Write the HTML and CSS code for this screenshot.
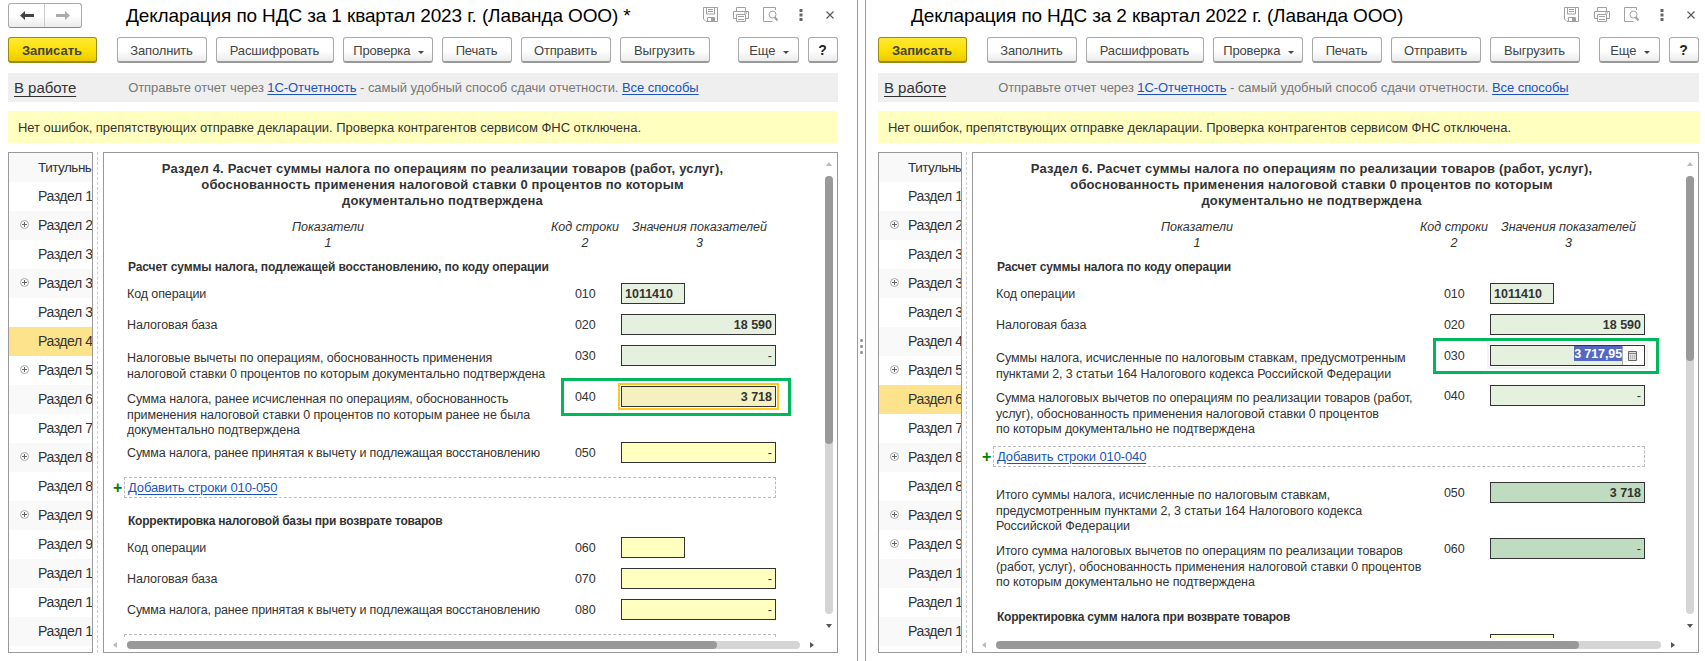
FILE: index.html
```
<!DOCTYPE html>
<html lang="ru">
  <head>
    <meta charset="UTF-8" />
    <title>Декларация по НДС</title>
    <link rel="stylesheet" href="styles.css">
  </head>
  <body>
    <!-- Icons -->
    <svg class="sprite" width="0" height="0">
      <symbol id="i-save" viewBox="0 0 16 16">
        <path d="M.5.5h14v14H3L.5 12zM3.500 1v6h8V1M5 2.500h5M5 4.500h5M4.500 14.500v-4h7v4" fill="none" stroke="#a0a0a0" />
        <path d="M8 11h3v3.500H8z" fill="#a0a0a0" />
      </symbol>
      <symbol id="i-print" viewBox="0 0 16 16">
        <path d="M3.500 4.500v-4h9v4M3.500 11.500h-3v-7h15v7h-3M3.500 7.500h9v7h-9zM5 9.500h6M5 12.500h6M11 6h3" fill="none" stroke="#a0a0a0" />
      </symbol>
      <symbol id="i-preview" viewBox="0 0 16 16">
        <path d="M12.500 3V.5H.5v14h9" fill="none" stroke="#a0a0a0" />
        <circle cx="9.500" cy="7.500" r="3.500" fill="none" stroke="#a0a0a0" />
        <path d="M11.500 10l3 3.500" stroke="#a0a0a0" stroke-width="2" />
      </symbol>
      <symbol id="i-dots" viewBox="0 0 4 12">
        <path d="M.5 0h3v3h-3zM.5 4.500h3v3h-3zM.5 9h3v3h-3z" fill="#666" />
      </symbol>
      <symbol id="i-close" viewBox="0 0 8 8">
        <path d="M.5.5l7 7M7.500.5l-7 7" stroke="#555" stroke-width="1.100" />
      </symbol>
      <symbol id="i-plus" viewBox="0 0 9 9">
        <circle cx="4.500" cy="4.500" r="4" fill="#fff" stroke="#a6a6a6" />
        <path d="M2 4.500h5M4.500 2v5" stroke="#666" />
      </symbol>
      <symbol id="i-calc" viewBox="0 0 9 10">
        <path d="M.5.5h8v9h-8z" fill="#ddd" stroke="#666" />
        <path d="M1 2.500h7" stroke="#888" />
        <path d="M2 5h5M2 7h5" stroke="#999" stroke-dasharray="1 1" />
      </symbol>
    </svg>

    <div class="workspace">
      <section class="window">
        <header class="title-bar">
          <div class="nav-buttons">
            <button><svg width="14" height="9"><path d="M5 0L0 4.500 5 9V6h9V3H5z" fill="#444" /></svg></button>
            <button><svg width="14" height="9"><path d="M9 0l5 4.500L9 9V6H0V3h9z" fill="#aaa" /></svg></button>
          </div>
          <h1>Декларация по НДС за 1 квартал 2023 г. (Лаванда ООО) *</h1>
          <div class="title-icons">
            <svg width="16" height="16"><use href="#i-save" /></svg>
            <svg width="16" height="16"><use href="#i-print" /></svg>
            <svg width="16" height="16"><use href="#i-preview" /></svg>
            <svg class="dots" width="4" height="12"><use href="#i-dots" /></svg>
            <svg width="8" height="8"><use href="#i-close" /></svg>
          </div>
        </header>

        <div class="toolbar">
          <button class="btn primary">Записать</button>
          <button class="btn">Заполнить</button>
          <button class="btn wide">Расшифровать</button>
          <button class="btn">Проверка <i class="caret"></i></button>
          <button class="btn small">Печать</button>
          <button class="btn">Отправить</button>
          <button class="btn">Выгрузить</button>
          <button class="btn more">Еще <i class="caret"></i></button>
          <button class="btn help">?</button>
        </div>

        <div class="status-bar">
          <a class="state">В работе</a>
          <p>Отправьте отчет через <a>1С-Отчетность</a> - самый удобный способ сдачи отчетности. <a>Все способы</a></p>
        </div>
        <div class="message">Нет ошибок, препятствующих отправке декларации. Проверка контрагентов сервисом ФНС отключена.</div>

        <div class="main">
          <ul class="sections">
            <li>Титульный лист</li>
            <li>Раздел 1</li>
            <li><svg width="9" height="9"><use href="#i-plus" /></svg>Раздел 2</li>
            <li>Раздел 3</li>
            <li><svg width="9" height="9"><use href="#i-plus" /></svg>Раздел 3</li>
            <li>Раздел 3</li>
            <li class="active">Раздел 4</li>
            <li><svg width="9" height="9"><use href="#i-plus" /></svg>Раздел 5</li>
            <li>Раздел 6</li>
            <li>Раздел 7</li>
            <li><svg width="9" height="9"><use href="#i-plus" /></svg>Раздел 8</li>
            <li>Раздел 8</li>
            <li><svg width="9" height="9"><use href="#i-plus" /></svg>Раздел 9</li>
            <li>Раздел 9</li>
            <li>Раздел 1</li>
            <li>Раздел 1</li>
            <li>Раздел 1</li>
          </ul>
          <div class="divider"></div>

          <div class="sheet">
            <div class="form">
              <h2>Раздел 4. Расчет суммы налога по операциям по реализации товаров (работ, услуг),<br>обоснованность применения налоговой ставки 0 процентов по которым<br>документально подтверждена</h2>
              <div class="head">
                <span>Показатели<br>1</span>
                <span>Код строки<br>2</span>
                <span>Значения показателей<br>3</span>
              </div>
              <h3>Расчет суммы налога, подлежащей восстановлению, по коду операции</h3>
              <div class="row">
                <label>Код операции</label><span class="code">010</span>
                <div class="field short green">1011410</div>
              </div>
              <div class="row">
                <label>Налоговая база</label><span class="code">020</span>
                <div class="field green">18 590</div>
              </div>
              <div class="row two">
                <label>Налоговые вычеты по операциям, обоснованность применения<br>налоговой ставки 0 процентов по которым документально подтверждена</label><span class="code">030</span>
                <div class="field empty green">-</div>
              </div>
              <div class="row three">
                <label>Сумма налога, ранее исчисленная по операциям, обоснованность<br>применения налоговой ставки 0 процентов по которым ранее не была<br>документально подтверждена</label><span class="code">040</span>
                <div class="field current">3 718</div>
                <div class="marker"></div>
              </div>
              <div class="row last">
                <label>Сумма налога, ранее принятая к вычету и подлежащая восстановлению</label><span class="code">050</span>
                <div class="field empty yellow">-</div>
              </div>
              <div class="add-row"><b>+</b><a>Добавить строки 010-050</a></div>
              <h3 class="next">Корректировка налоговой базы при возврате товаров</h3>
              <div class="row">
                <label>Код операции</label><span class="code">060</span>
                <div class="field short yellow"></div>
              </div>
              <div class="row">
                <label>Налоговая база</label><span class="code">070</span>
                <div class="field empty yellow">-</div>
              </div>
              <div class="row last">
                <label>Сумма налога, ранее принятая к вычету и подлежащая восстановлению</label><span class="code">080</span>
                <div class="field empty yellow">-</div>
              </div>
              <div class="add-row"></div>
            </div>
            <div class="v-scroll">
              <i class="up"></i>
              <div class="track"><div class="thumb long"></div></div>
              <i class="down"></i>
            </div>
            <div class="h-scroll">
              <i class="left"></i>
              <div class="track"><div class="thumb"></div></div>
              <i class="right"></i>
            </div>
          </div>
        </div>
      </section>

      <div class="splitter"><i></i><i></i><i></i></div>

      <section class="window second">
        <header class="title-bar">
          <h1>Декларация по НДС за 2 квартал 2022 г. (Лаванда ООО)</h1>
          <div class="title-icons">
            <svg width="16" height="16"><use href="#i-save" /></svg>
            <svg width="16" height="16"><use href="#i-print" /></svg>
            <svg width="16" height="16"><use href="#i-preview" /></svg>
            <svg class="dots" width="4" height="12"><use href="#i-dots" /></svg>
            <svg width="8" height="8"><use href="#i-close" /></svg>
          </div>
        </header>

        <div class="toolbar">
          <button class="btn primary">Записать</button>
          <button class="btn">Заполнить</button>
          <button class="btn wide">Расшифровать</button>
          <button class="btn">Проверка <i class="caret"></i></button>
          <button class="btn small">Печать</button>
          <button class="btn">Отправить</button>
          <button class="btn">Выгрузить</button>
          <button class="btn more">Еще <i class="caret"></i></button>
          <button class="btn help">?</button>
        </div>

        <div class="status-bar">
          <a class="state">В работе</a>
          <p>Отправьте отчет через <a>1С-Отчетность</a> - самый удобный способ сдачи отчетности. <a>Все способы</a></p>
        </div>
        <div class="message">Нет ошибок, препятствующих отправке декларации. Проверка контрагентов сервисом ФНС отключена.</div>

        <div class="main">
          <ul class="sections">
            <li>Титульный лист</li>
            <li>Раздел 1</li>
            <li><svg width="9" height="9"><use href="#i-plus" /></svg>Раздел 2</li>
            <li>Раздел 3</li>
            <li><svg width="9" height="9"><use href="#i-plus" /></svg>Раздел 3</li>
            <li>Раздел 3</li>
            <li>Раздел 4</li>
            <li><svg width="9" height="9"><use href="#i-plus" /></svg>Раздел 5</li>
            <li class="active">Раздел 6</li>
            <li>Раздел 7</li>
            <li><svg width="9" height="9"><use href="#i-plus" /></svg>Раздел 8</li>
            <li>Раздел 8</li>
            <li><svg width="9" height="9"><use href="#i-plus" /></svg>Раздел 9</li>
            <li><svg width="9" height="9"><use href="#i-plus" /></svg>Раздел 9</li>
            <li>Раздел 1</li>
            <li>Раздел 1</li>
            <li>Раздел 1</li>
          </ul>
          <div class="divider"></div>

          <div class="sheet">
            <div class="form">
              <h2>Раздел 6. Расчет суммы налога по операциям по реализации товаров (работ, услуг),<br>обоснованность применения налоговой ставки 0 процентов по которым<br>документально не подтверждена</h2>
              <div class="head">
                <span>Показатели<br>1</span>
                <span>Код строки<br>2</span>
                <span>Значения показателей<br>3</span>
              </div>
              <h3>Расчет суммы налога по коду операции</h3>
              <div class="row">
                <label>Код операции</label><span class="code">010</span>
                <div class="field short green">1011410</div>
              </div>
              <div class="row">
                <label>Налоговая база</label><span class="code">020</span>
                <div class="field green">18 590</div>
              </div>
              <div class="row two edit">
                <label>Суммы налога, исчисленные по налоговым ставкам, предусмотренным<br>пунктами 2, 3 статьи 164 Налогового кодекса Российской Федерации</label><span class="code">030</span>
                <div class="field green editing">
                  <mark>3 717,95</mark>
                  <span class="calc"><svg width="9" height="10"><use href="#i-calc" /></svg></span>
                </div>
                <div class="marker"></div>
              </div>
              <div class="row three sum">
                <label>Сумма налоговых вычетов по операциям по реализации товаров (работ,<br>услуг), обоснованность применения налоговой ставки 0 процентов<br>по которым документально не подтверждена</label><span class="code">040</span>
                <div class="field empty green">-</div>
              </div>
              <div class="add-row"><b>+</b><a>Добавить строки 010-040</a></div>
              <div class="row three total">
                <label>Итого суммы налога, исчисленные по налоговым ставкам,<br>предусмотренным пунктами 2, 3 статьи 164 Налогового кодекса<br>Российской Федерации</label><span class="code">050</span>
                <div class="field dark">3 718</div>
              </div>
              <div class="row three">
                <label>Итого сумма налоговых вычетов по операциям по реализации товаров<br>(работ, услуг), обоснованность применения налоговой ставки 0 процентов<br>по которым документально не подтверждена</label><span class="code">060</span>
                <div class="field empty dark">-</div>
              </div>
              <h3 class="next">Корректировка сумм налога при возврате товаров</h3>
              <div class="row">
                <label></label><span class="code"></span>
                <div class="field short yellow"></div>
              </div>
            </div>
            <div class="v-scroll">
              <i class="up"></i>
              <div class="track"><div class="thumb"></div></div>
              <i class="down"></i>
            </div>
            <div class="h-scroll">
              <i class="left"></i>
              <div class="track"><div class="thumb"></div></div>
              <i class="right"></i>
            </div>
          </div>
        </div>
      </section>
    </div>
  </body>
</html>
```
FILE: styles.css
```
* {
  box-sizing: border-box;
}

body {
  margin: 0;
  background: #fff;
  color: #333;
  font-family: "Liberation Sans", Arial, sans-serif;
  font-size: 13px;
  letter-spacing: -0.04px;
}

.sprite {
  display: block;
}

h1,
h2,
h3,
p,
ul {
  margin: 0;
  padding: 0;
}

.workspace {
  display: grid;
  grid-template-columns: 857px 9px 1fr;
  height: 661px;
  overflow: hidden;
}

.window {
  padding: 0 19px 8px 8px;
  display: flex;
  flex-direction: column;
  min-width: 0;
}

.window.second {
  padding: 0 6px 8px 12px;
}

.splitter {
  border: 1px solid #999;
  border-width: 0 1px;
  display: flex;
  flex-direction: column;
  align-items: center;
  gap: 3px;
  padding-top: 339px;
}

.splitter i {
  width: 3px;
  height: 3px;
  border-radius: 1px;
  background: #999;
}

/* Title */
.title-bar {
  display: flex;
  align-items: center;
  height: 37px;
  padding-bottom: 7px;
}

.nav-buttons {
  display: flex;
  width: 74px;
  height: 25px;
  margin-right: 44px;
  border: 1px solid #aaa;
  border-bottom-color: #888;
  border-radius: 3px;
  background: linear-gradient(#fff 50%, #ebebeb);
}

.nav-buttons button {
  display: flex;
  align-items: center;
  justify-content: center;
  width: 36px;
  padding: 0;
  border: none;
  background: none;
}

.nav-buttons button:first-child {
  border-right: 1px solid #ccc;
}

h1 {
  padding-top: 1px;
  color: #000;
  font-size: 19px;
  font-weight: normal;
  letter-spacing: -0.13px;
  white-space: nowrap;
}

.second h1 {
  margin-left: 33px;
}

.title-icons {
  display: flex;
  align-items: center;
  gap: 14px;
  margin-left: auto;
  padding-right: 4px;
}

.title-icons .dots {
  margin: 0 9px 0 6px;
}

/* Toolbar */
.toolbar {
  display: flex;
  gap: 9px;
  height: 26px;
  margin-bottom: 10px;
}

.btn {
  width: 90px;
  height: 26px;
  padding: 1px 1px 0 0;
  border: 1px solid #aaa;
  border-bottom: 2px solid #999;
  border-radius: 3px;
  background: linear-gradient(#fff 55%, #ebebeb);
  color: #444;
  font: inherit;
  letter-spacing: -0.15px;
  white-space: nowrap;
}

.btn.primary {
  width: 89px;
  margin-right: 11px;
  border-color: #9a8a10;
  background: linear-gradient(#ffe838, #fde000 55%, #ecca00);
  font-weight: bold;
  letter-spacing: 0;
}

.btn.wide {
  width: 118px;
}

.btn.small {
  width: 70px;
}

.btn.more {
  width: 61px;
  margin-left: auto;
}

.btn.help {
  width: 30px;
  color: #222;
  font-size: 14px;
  font-weight: bold;
}

.caret {
  display: inline-block;
  margin: 0 -2px 1px 4px;
  border: 3px solid transparent;
  border-top-color: #444;
  border-bottom: none;
}

/* Status and message */
.status-bar {
  display: flex;
  align-items: center;
  height: 29px;
  margin-bottom: 9px;
  padding-left: 6px;
  background: #efefef;
  color: #777;
}

.status-bar p {
  margin-left: 52px;
  letter-spacing: -0.07px;
}

.status-bar a,
.add-row a {
  color: #1a54b8;
  text-decoration: underline;
  text-underline-offset: 2px;
}

.status-bar .state {
  color: #333;
  font-size: 15px;
  text-underline-offset: 3px;
}

.message {
  height: 32px;
  margin-bottom: 9px;
  padding-left: 10px;
  background: #ffffc0;
  line-height: 33px;
}

/* Sections list */
.main {
  display: flex;
  height: 501px;
}

.sections {
  flex: none;
  width: 85px;
  border: 1px solid #999;
  list-style: none;
  overflow: hidden;
}

.second .sections {
  width: 84px;
}

.sections li {
  position: relative;
  height: 29px;
  padding-left: 29px;
  font-size: 14px;
  letter-spacing: -0.42px;
  line-height: 29px;
  white-space: nowrap;
}

.sections li:first-child {
  font-size: 13.500px;
  letter-spacing: -0.5px;
}

.sections li:nth-child(odd) {
  background: #f9f9f9;
}

.sections li.active {
  background: #fde38c;
}

.sections svg {
  position: absolute;
  left: 11px;
  top: 9px;
}

.divider {
  width: 5px;
  margin-right: 5px;
  border-right: 1px dashed #ccc;
}

/* Sheet */
.sheet {
  flex: 1;
  display: grid;
  grid-template: 485px 14px / 1fr 14px;
  border: 1px solid #999;
  min-width: 0;
}

.form {
  overflow: hidden;
  font-size: 12.5px;
  letter-spacing: -0.1px;
}

h2 {
  width: 677px;
  padding-top: 8px;
  font-size: 13px;
  letter-spacing: 0.17px;
  line-height: 16px;
  text-align: center;
}

.head {
  display: grid;
  grid-template-columns: 448px 67px 162px;
  margin-top: 11px;
  font-style: italic;
  letter-spacing: 0;
  line-height: 15.500px;
  text-align: center;
}

.head span:nth-child(2),
.head span:nth-child(3) {
  margin-left: -1px;
}

h3 {
  height: 23px;
  margin-top: 9px;
  padding-left: 24px;
  font-size: 12px;
  letter-spacing: -0.11px;
  line-height: 15px;
}

.row {
  display: grid;
  grid-template-columns: 448px 69px 155px;
  position: relative;
  height: 31px;
}

.row.two {
  height: 41px;
}

.row.two.edit {
  height: 40px;
}

.row.three {
  height: 56px;
}

.row.sum {
  height: 61px;
}

.row.last {
  height: 35px;
}

.row label {
  padding: 4px 0 0 23px;
  line-height: 15.500px;
  white-space: nowrap;
}

.row.two label,
.row.three label {
  padding-top: 6px;
}

.row.last label {
  letter-spacing: -0.14px;
}

.code {
  padding-left: 23px;
  line-height: 23px;
}

.field {
  height: 21px;
  padding: 0 3px;
  border: 1px solid #333;
  font-weight: bold;
  letter-spacing: 0;
  line-height: 20px;
  text-align: right;
}

.field.short {
  width: 64px;
  text-align: left;
}

.field.empty {
  font-weight: normal;
  line-height: 21px;
}

.green {
  background: #e6f0de;
}

.yellow {
  background: #ffffc0;
}

.dark {
  background: #c0dcc0;
}

.current {
  background: #f4f0c0;
  outline: 2px solid #ffc820;
  outline-offset: 1px;
}

.field.editing {
  display: flex;
  justify-content: flex-end;
  padding: 0;
  outline: 2px solid #f3f3f3;
  outline-offset: 1px;
}

.editing mark {
  height: 15px;
  background: #5468c4;
  color: #fff;
  letter-spacing: -0.1px;
  line-height: 16px;
}

.calc {
  display: flex;
  align-items: center;
  justify-content: center;
  width: 22px;
  height: 19px;
  padding-right: 2px;
  border-left: 1px solid #aaa;
  background: #fff;
}

/* green frame over the compared line */
.marker {
  position: absolute;
  left: 457px;
  top: -8px;
  width: 230px;
  height: 38px;
  border: 3px solid #00b85c;
}

.edit .marker {
  left: 460px;
  top: -7px;
  width: 226px;
  height: 36px;
}

.add-row {
  position: relative;
  width: 652px;
  height: 21px;
  margin-left: 20px;
  padding-left: 3px;
  border: 1px dashed #bbb;
  font-size: 13px;
  letter-spacing: -0.13px;
  line-height: 19px;
}

.add-row b {
  position: absolute;
  left: -12px;
  color: #008000;
  font-size: 16px;
}

.add-row + .total {
  margin-top: 15px;
}

h3.next {
  margin-top: 16px;
  letter-spacing: -0.22px;
}

.second h3.next {
  height: 24px;
}

/* Scrollbars */
.v-scroll {
  display: flex;
  flex-direction: column;
  align-items: center;
  gap: 10px;
  padding: 9px 2px 10px 0;
}

.h-scroll {
  grid-column: 1 / 3;
  display: flex;
  align-items: center;
  gap: 10px;
  padding: 0 23px 0 9px;
}

.track {
  flex: 1;
  border-radius: 4px;
  background: #d5d5d5;
}

.v-scroll .track {
  width: 8px;
}

.h-scroll .track {
  height: 8px;
}

.thumb {
  border-radius: 4px;
  background: #999;
}

.v-scroll .thumb {
  height: 185px;
}

.v-scroll .thumb.long {
  height: 268px;
}

.h-scroll .thumb {
  width: 590px;
  height: 8px;
}

.second .h-scroll .thumb {
  width: 583px;
}

.v-scroll i,
.h-scroll i {
  border: 3px solid transparent;
}

.v-scroll .up {
  border-top: none;
  border-bottom: 4px solid #bbb;
}

.v-scroll .down {
  border-bottom: none;
  border-top: 4px solid #555;
}

.h-scroll .left {
  border-left: none;
  border-right: 4px solid #bbb;
}

.h-scroll .right {
  border-right: none;
  border-left: 4px solid #555;
}
```
